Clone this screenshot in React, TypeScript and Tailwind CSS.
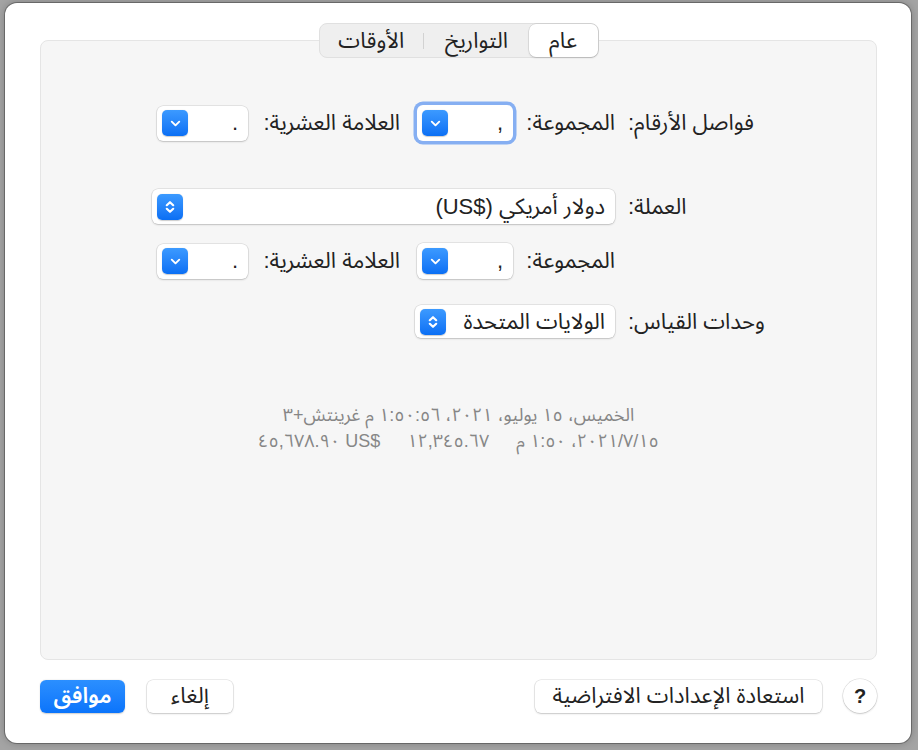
import { ChevronDown } from 'lucide-react';
import clsx from 'clsx';

const UpDown = () => (
  <svg width="16" height="16" viewBox="0 0 16 16" fill="none" stroke="currentColor" strokeWidth="2.2" strokeLinecap="round" strokeLinejoin="round">
    <path d="M4.8 6.2 8 3.2l3.2 3" />
    <path d="M4.8 9.8 8 12.8l3.2-3" />
  </svg>
);

type PopupProps = {
  value: React.ReactNode;
  className: string;
  updown?: boolean;
  focused?: boolean;
};

const Popup = ({ value, className, updown, focused }: PopupProps) => (
  <div
    className={clsx(
      'flex items-center justify-between rounded-[6px] bg-white pl-[5px] pr-[10px] shadow-[0_0_0_0.5px_rgba(0,0,0,0.14),0_1px_2px_rgba(0,0,0,0.16)]',
      focused && 'ring-[3.5px] ring-[#86aff2]',
      className,
    )}
  >
    <span>{value}</span>
    <span className="flex h-[26px] w-[26px] items-center justify-center rounded-[5px] bg-gradient-to-b from-[#3c9aff] to-[#0a6ff4] text-white shadow-[0_0.5px_1px_rgba(0,0,0,0.2)]">
      {updown ? <UpDown /> : <ChevronDown size={15} strokeWidth={3} />}
    </span>
  </div>
);

// label column runs from x=628 to x=773; labels hug its left (end) side
const Label = ({ children }: { children?: string }) => (
  <span className="w-[145px] whitespace-nowrap text-end">{children}</span>
);

const SeparatorRow = ({ label, focused }: { label?: string; focused?: boolean }) => (
  <div className="flex items-center">
    <Label>{label}</Label>
    <span className="ms-[13px] w-[91px] whitespace-nowrap text-start">المجموعة:</span>
    <Popup value="," focused={focused} className="ms-[11px] h-[36px] w-[96px]" />
    <span className="ms-[17px] w-[138px] whitespace-nowrap text-start">العلامة العشرية:</span>
    <Popup value="." className="ms-[14px] h-[35px] w-[91px]" />
  </div>
);

export default function App() {
  return (
    <div className="h-[750px] w-[918px] overflow-hidden bg-[#a4a4a4] pl-[5px] pt-[3px] font-['Liberation_Sans','Noto_Sans_Arabic','DejaVu_Sans',sans-serif] text-[22px] leading-[30px] text-[#222]">
      <div className="flex h-[740px] w-[906px] flex-col rounded-[12px] bg-white pl-[35px] pr-[34px] pt-[20px] shadow-[0_0_0_1px_rgba(0,0,0,0.28),0_0_8px_rgba(0,0,0,0.25)]">
        {/* tabs */}
        <div dir="rtl" className="relative z-10 flex h-[35px] w-[280px] items-center self-center rounded-[8px] border border-[#e0e0e0] bg-[#efefef]">
          <div className="flex h-full w-[69px] items-center justify-center rounded-[7px] bg-white shadow-[0_0_0_0.5px_rgba(0,0,0,0.12),0_1px_2px_rgba(0,0,0,0.14)]">
            عام
          </div>
          <div className="flex w-[105px] items-center justify-center">التواريخ</div>
          <div className="h-[16px] w-px bg-[#d2d2d2]" />
          <div className="flex w-[104px] items-center justify-center">الأوقات</div>
        </div>

        {/* main panel */}
        <div className="-mt-[18px] flex h-[620px] flex-col rounded-[8px] border border-[#e5e5e5] bg-[#f6f6f6]">
          <div dir="rtl" className="flex flex-col items-start pr-[103px] pt-[64px]">
            <SeparatorRow label="فواصل الأرقام:" focused />

            <div className="mt-[48px] flex items-center">
              <Label>العملة:</Label>
              <Popup
                value={
                  <>
                    دولار أمريكي <bdi dir="ltr">(US$)</bdi>
                  </>
                }
                updown
                className="ms-[13px] h-[35px] w-[463px]"
              />
            </div>

            <div className="mt-[19px]">
              <SeparatorRow />
            </div>

            <div className="mt-[26px] flex items-center">
              <Label>وحدات القياس:</Label>
              <Popup value="الولايات المتحدة" updown className="ms-[13px] h-[33px] w-[200px]" />
            </div>
          </div>

          <div className="mt-[64px] flex flex-col items-center text-[18px] leading-[26px] text-[#868686]">
            <div dir="rtl">الخميس، ١٥ يوليو، ٢٠٢١، ١:٥٠:٥٦ م غرينتش+٣</div>
            <div dir="ltr" className="flex gap-[27px]">
              <span>٤٥,٦٧٨.٩٠ US$</span>
              <span>١٢,٣٤٥.٦٧</span>
              <span dir="rtl">{'١٥\u200f/٧\u200f/٢٠٢١، ١:٥٠ م'}</span>
            </div>
          </div>
        </div>

        {/* bottom buttons */}
        <div dir="rtl" className="mt-[19px] flex items-center justify-between">
          <div className="flex items-center">
            <button className="flex h-[34px] w-[34px] items-center justify-center rounded-full bg-white text-[20px] font-semibold shadow-[0_0_0_0.5px_rgba(0,0,0,0.14),0_1px_2px_rgba(0,0,0,0.16)]">
              ?
            </button>
            <button className="ms-[21px] h-[33px] w-[287px] rounded-[6px] bg-white shadow-[0_0_0_0.5px_rgba(0,0,0,0.14),0_1px_2px_rgba(0,0,0,0.16)]">
              استعادة الإعدادات الافتراضية
            </button>
          </div>
          <div className="flex items-center">
            <button className="h-[33px] w-[86px] rounded-[6px] bg-white shadow-[0_0_0_0.5px_rgba(0,0,0,0.14),0_1px_2px_rgba(0,0,0,0.16)]">
              إلغاء
            </button>
            <button className="ms-[22px] h-[33px] w-[85px] rounded-[6px] bg-gradient-to-b from-[#2b8fff] to-[#0a74fb] font-semibold text-white shadow-[0_0.5px_1.5px_rgba(0,0,0,0.2)]">
              موافق
            </button>
          </div>
        </div>
      </div>
    </div>
  );
}
